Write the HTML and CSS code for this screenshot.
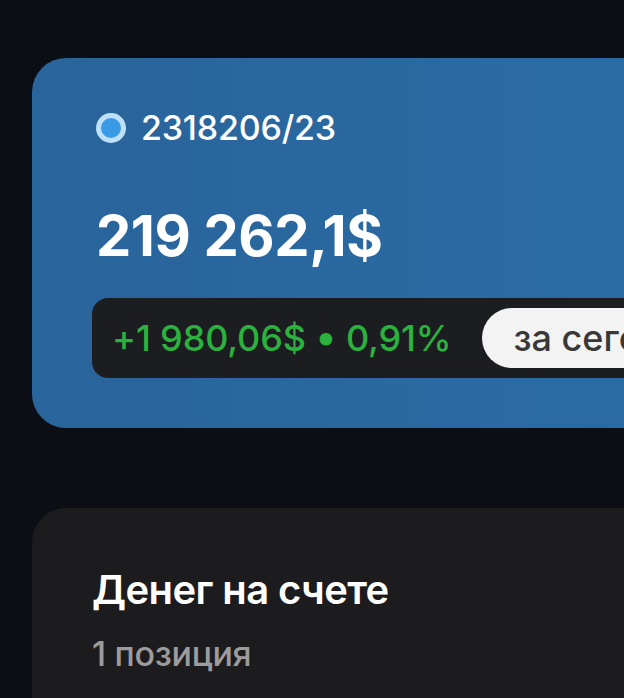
FILE: index.html
```html
<!DOCTYPE html>
<html lang="ru">
<head>
<meta charset="utf-8">
<link rel="stylesheet" href="styles.css">
</head>
<body>
<div class="page">
  <section class="account-card">
    <div class="account-row">
      <span class="status-dot"></span>
      <span class="account-id">2318206/23</span>
    </div>
    <div class="balance">219 262,1$</div>
    <div class="change-bar">
      <span class="change">+1 980,06$ <span class="sep">•</span> 0,91%</span>
      <span class="period">за сегодня</span>
    </div>
  </section>
  <section class="cash-card">
    <h2 class="cash-title">Денег на счете</h2>
    <div class="cash-sub">1 позиция</div>
  </section>
</div>
</body>
</html>
```
FILE: styles.css
```css
html, body {
  margin: 0;
  padding: 0;
  background: #0b0e14;
  overflow: hidden;
}
.page {
  width: 624px;
  height: 698px;
  overflow: hidden;
  padding: 58px 0 0 32px;
  box-sizing: border-box;
  font-family: Inter, "Noto Sans", sans-serif;
  display: flex;
  flex-direction: column;
  gap: 80px;
}
.account-card {
  width: 680px;
  flex: none;
  height: 370px;
  box-sizing: border-box;
  border-radius: 34px;
  background: linear-gradient(90deg, #29649a 0%, #2b6ca6 100%);
  padding: 51px 0 0 64px;
}
.account-row {
  display: flex;
  align-items: center;
  gap: 15px;
  height: 38px;
}
.status-dot {
  width: 20px;
  height: 20px;
  border-radius: 50%;
  background: #3b9ae6;
  border: 5px solid #bfe0fa;
  flex: none;
}
.account-id {
  color: #ffffff;
  font-size: 34px;
  font-weight: 500;
  letter-spacing: -0.2px;
  line-height: 38px;
}
.balance {
  margin-top: 59px;
  color: #ffffff;
  font-size: 56px;
  font-weight: 700;
  letter-spacing: -0.4px;
  line-height: 60px;
}
.change-bar {
  margin-top: 32px;
  margin-left: -4px;
  height: 80px;
  box-sizing: border-box;
  background: #1c1d20;
  border-radius: 16px;
  display: flex;
  align-items: center;
  padding: 0 10px 0 20px;
  gap: 31px;
}
.change {
  color: #2bb13e;
  font-size: 36px;
  font-weight: 500;
  letter-spacing: -0.15px;
  white-space: nowrap;
}
.sep {
  font-size: 40px;
  line-height: 1;
}
.period {
  background: #f3f3f3;
  color: #383838;
  height: 60px;
  border-radius: 30px;
  display: flex;
  align-items: center;
  padding: 0 31px;
  font-size: 36px;
  font-weight: 500;
  white-space: nowrap;
}
.cash-card {
  width: 680px;
  flex: none;
  height: 260px;
  box-sizing: border-box;
  border-radius: 34px;
  background: #1c1c1e;
  padding: 58px 0 0 60px;
}
.cash-title {
  margin: 0;
  color: #ffffff;
  font-size: 40px;
  font-weight: 600;
  letter-spacing: -0.6px;
  line-height: 48px;
}
.cash-sub {
  margin-top: 20px;
  color: #9c9c9e;
  font-size: 34px;
  font-weight: 500;
  letter-spacing: -0.3px;
  line-height: 40px;
}
```
